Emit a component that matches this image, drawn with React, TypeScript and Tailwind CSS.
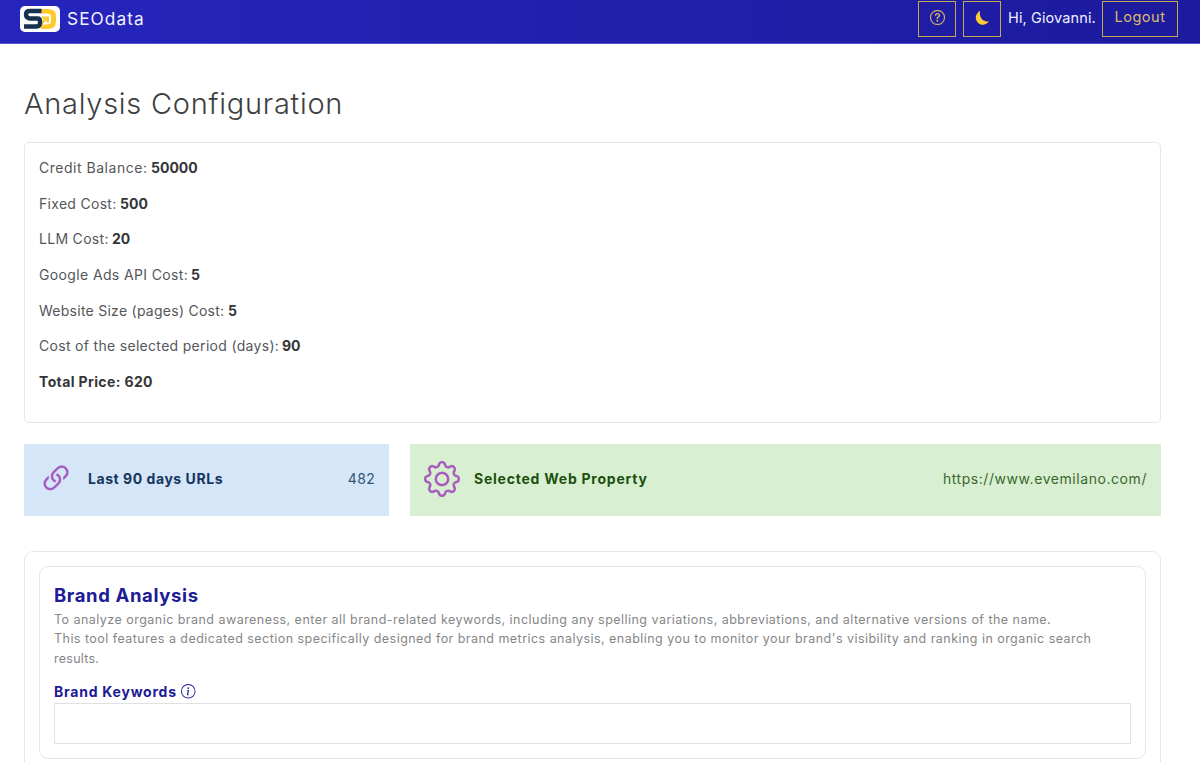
import { useState } from "react";
import { BsGear, BsInfoCircle, BsLink45Deg, BsQuestionCircle } from "react-icons/bs";

const costs = [
  { label: "Credit Balance:", value: "50000", labelClass: "w-[108px] tracking-[0.52px]" },
  { label: "Fixed Cost:", value: "500", labelClass: "w-[77px] tracking-[0.3px]" },
  { label: "LLM Cost:", value: "20", labelClass: "w-[69px] tracking-[0.3px]" },
  { label: "Google Ads API Cost:", value: "5", labelClass: "w-[148px] tracking-[0.37px]" },
  { label: "Website Size (pages) Cost:", value: "5", labelClass: "w-[185px] tracking-[0.26px]" },
  { label: "Cost of the selected period (days):", value: "90", labelClass: "w-[239px] tracking-[0.31px]" },
];

function Logo() {
  return (
    <svg aria-hidden="true" viewBox="0 0 40 26" className="h-[26px] w-10">
      <rect width="40" height="26" rx="5" fill="#fff" />
      <path d="M21 3h7q8 0 8 7v5q0 8-8 8h-7v-4.5h6q4 0 4-4v-3q0-4-4-4h-6z" fill="#fdcb2e" />
      <path d="M22 10.5h7v6h-2.5v-2.5L22 18.5V15l2.5-2.2H22z" fill="#fdcb2e" />
      <path d="M21.5 5H10Q6 5 6 8.500T10 12.5h7.5Q20 12.5 20 15v2q0 3.5-3.5 3.500H4" fill="none" stroke="#16324f" strokeWidth="4.4" />
    </svg>
  );
}

function MoonIcon() {
  return (
    <svg aria-hidden="true" viewBox="0 0 16 16" className="h-4 w-4">
      <path d="M6.2 1A7.1 7.1 0 1 0 15 11.2C9.5 12.6 4.6 7.5 6.2 1z" fill="#fdcb35" />
    </svg>
  );
}

function Header() {
  return (
    <header className="flex h-11 items-start justify-between border-b border-[#5553cf] bg-linear-to-r from-[#2525bd] to-[#1c1b9d] pr-[22px] pl-5">
      <div className="flex items-center gap-[7px] pt-[6px]">
        <Logo />
        <span className="text-[17.3px] leading-6 whitespace-nowrap tracking-[1.05px] text-[#f2f1ff]">SEOdata</span>
      </div>
      <div className="flex items-center pt-px text-[14.5px] whitespace-nowrap">
        <button aria-label="Help" className="flex h-9 w-[38px] items-center justify-center border border-[#c7a651] pb-[3px] text-[#e4bd64]">
          <BsQuestionCircle size={15} strokeWidth={0.2} />
        </button>
        <button aria-label="Dark mode" className="ml-[7px] flex h-9 w-[38px] items-center justify-center border border-[#c7a651] pb-[3px]">
          <MoonIcon />
        </button>
        <span className="ml-[7px] w-[88px] pb-[3px] tracking-[0.12px] text-[#f0efff]">Hi, Giovanni.</span>
        <button className="ml-[6px] h-9 w-[76px] border border-[#c7a651] pb-[4px] tracking-[0.55px] text-[#dfb968]">Logout</button>
      </div>
    </header>
  );
}

function CostCard() {
  return (
    <section className="h-[281px] rounded-[5px] border border-[#e5e7eb] px-[14px] pt-[6.5px]">
      {costs.map((cost) => (
        <p key={cost.label} className="flex h-[35.7px] items-center gap-1 whitespace-nowrap">
          <span className={cost.labelClass}>{cost.label}</span>
          <strong className="font-bold text-[#343638]">{cost.value}</strong>
        </p>
      ))}
      <p className="flex h-[35.7px] items-center font-bold tracking-[0.38px] text-[#343638]">Total Price: 620</p>
    </section>
  );
}

function BrandAnalysis() {
  const [keywords, setKeywords] = useState("");

  return (
    <section className="mt-[35px] h-[240px] rounded-t-[9px] border border-b-0 border-[#e5e7eb] px-[14px] pt-[14px]">
      <div className="h-[193px] rounded-[9px] border border-[#e5e7eb] px-[14px] pt-[15px]">
        <h2 className="h-7 text-[18.5px] leading-[26px] font-bold tracking-[0.62px] text-[#201b96]">Brand Analysis</h2>
        <div className="text-[12.5px] leading-[19.3px] whitespace-nowrap text-[#858687]">
          <p className="tracking-[0.465px]">To analyze organic brand awareness, enter all brand-related keywords, including any spelling variations, abbreviations, and alternative versions of the name.</p>
          <p className="tracking-[0.459px]">This tool features a dedicated section specifically designed for brand metrics analysis, enabling you to monitor your brand's visibility and ranking in organic search</p>
          <p className="tracking-[0.25px]">results.</p>
        </div>
        <label htmlFor="brand-keywords" className="mt-[13px] flex h-[21px] items-center gap-[5px] font-bold text-[#201b96]">
          <span className="w-[122px] whitespace-nowrap tracking-[0.76px]">Brand Keywords</span>
          <BsInfoCircle size={14.5} />
        </label>
        <input
          id="brand-keywords"
          value={keywords}
          onChange={(event) => setKeywords(event.target.value)}
          className="mt-px h-[41px] w-full border border-[#dfe1e3] px-3 outline-none"
        />
      </div>
    </section>
  );
}

export default function App() {
  return (
    <div className="h-[762px] overflow-hidden bg-white font-['Inter',sans-serif] text-[14px] text-[#54575a]">
      <Header />
      <main className="w-[1161px] pl-6">
        <h1 className="h-[98px] pt-[40px] text-[29px] leading-10 font-light whitespace-nowrap tracking-[0.73px] text-[#3d4043]">Analysis Configuration</h1>
        <CostCard />
        <div className="mt-[21px] flex h-[72px] gap-[21px]">
          <div className="flex w-[365px] items-center bg-[#d5e6f8] px-[14px] pb-[2px] text-[#355576]">
            <BsLink45Deg size={36} strokeWidth={0.1} className="text-[#a65abd]" />
            <strong className="ml-[14px] pb-px font-bold tracking-[0.55px] text-[#16365d]">Last 90 days URLs</strong>
            <span className="ml-auto pb-px tracking-[0.3px]">482</span>
          </div>
          <div className="flex flex-1 items-center bg-[#d8f0d1] px-[14px] pb-[2px] text-[#3c6630]">
            <BsGear size={36} strokeWidth={0.1} className="text-[#a65abd]" />
            <strong className="ml-[14px] pb-px font-bold tracking-[0.76px] text-[#20500f]">Selected Web Property</strong>
            <span className="ml-auto pb-px tracking-[0.56px]">https://www.evemilano.com/</span>
          </div>
        </div>
        <BrandAnalysis />
      </main>
    </div>
  );
}
